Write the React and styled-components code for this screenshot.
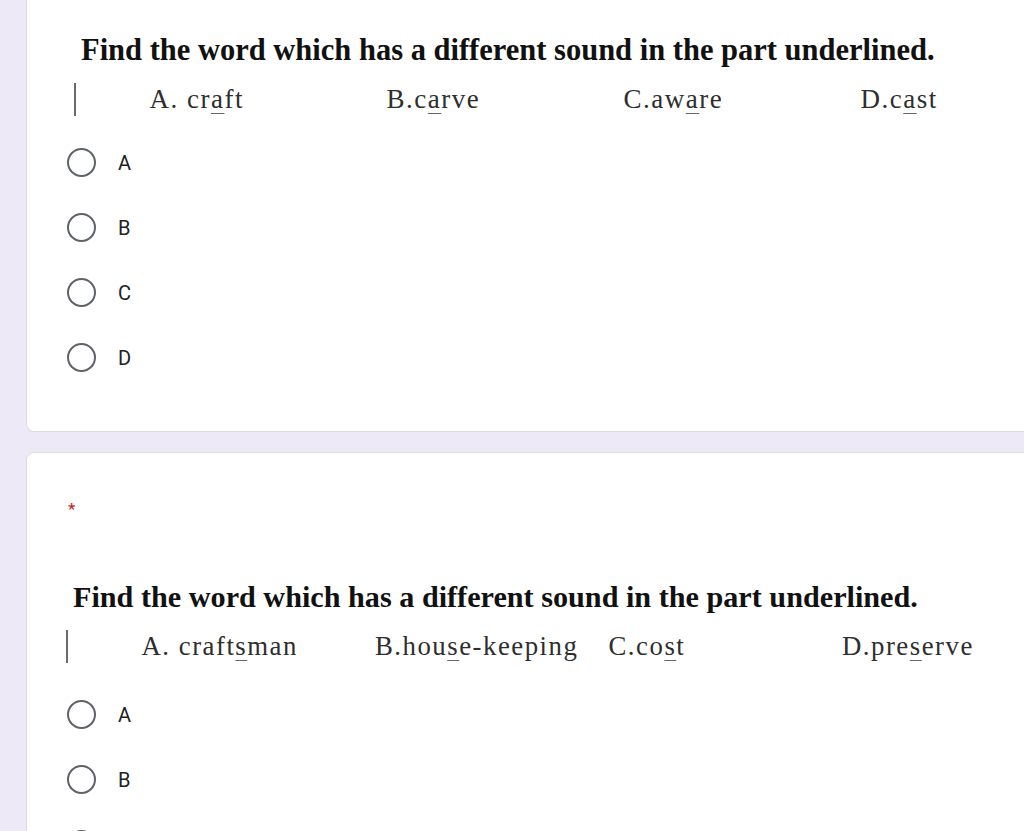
import React from 'react'
import styled, { createGlobalStyle } from 'styled-components'

const GlobalStyle = createGlobalStyle`
	html, body {
		margin: 0;
		padding: 0;
		background: #ede9f7;
	}
`;

const questions = [
	{
		id: 1,
		open: true,
		required: false,
		shift: 0,
		col: 237,
		titleSize: 30.5,
		optionSize: 27,
		top: 32,
		choicesGap: 15,
		options: [
			['A. cr', 'a', 'ft'],
			['B.c', 'a', 'rve'],
			['C.aw', 'a', 're'],
			['D.c', 'a', 'st'],
		],
		answers: ['A', 'B', 'C', 'D'],
	},
	{
		id: 2,
		open: false,
		required: true,
		shift: -8,
		col: 233.5,
		titleSize: 30.2,
		optionSize: 26.8,
		top: 58,
		choicesGap: 20,
		options: [
			['A. craft', 's', 'man'],
			['B.hou', 's', 'e-keeping'],
			['C.co', 's', 't'],
			['D.pre', 's', 'erve'],
		],
		answers: ['A', 'B', 'C', 'D'],
	},
];

function App() {
	return (
		<Page>
			<GlobalStyle />
			<CardList>
				{questions.map((q) => (
					<Card key={q.id} $open={q.open}>
						{q.required && <Required>*</Required>}
						<Title $shift={q.shift} $size={q.titleSize} $top={q.top}>
							Find the word which has a different sound in the part underlined.
						</Title>
						<OptionRow $shift={q.shift} $gap={q.choicesGap}>
							<Caret />
							<OptionGrid $col={q.col} $size={q.optionSize}>
								{q.options.map(([before, mark, after]) => (
									<span key={before}>
										{before}
										<Mark>{mark}</Mark>
										{after}
									</span>
								))}
							</OptionGrid>
						</OptionRow>
						<Choices>
							{q.answers.map((a) => (
								<Choice key={a}>
									<Radio />
									<ChoiceLabel>{a}</ChoiceLabel>
								</Choice>
							))}
						</Choices>
					</Card>
				))}
			</CardList>
		</Page>
	);
}

const Page = styled.div`
	width: 100vw;
	height: 831px;
	overflow: hidden;
	background: #ede9f7;
`;

const CardList = styled.div`
	display: flex;
	flex-direction: column;
	gap: 20px;
	padding-left: 26px;
`;

const Card = styled.section`
	background: #fff;
	border: 1px solid #dcdbe3;
	border-top: ${({ $open }) => ($open ? 'none' : '1px solid #dcdbe3')};
	border-radius: ${({ $open }) => ($open ? '0 0 8px 8px' : '8px')};
	margin-right: -20px;
	padding-bottom: 41px;
	padding-top: ${({ $open }) => ($open ? '0' : '44px')};
`;

const Required = styled.div`
	padding-left: 41px;
	font-family: Roboto, 'Liberation Sans', sans-serif;
	font-size: 17px;
	line-height: 24px;
	height: 24px;
	color: #c5221f;
`;

const Title = styled.h2`
	margin: ${({ $top }) => $top}px 0 0 ${({ $shift }) => 54 + $shift}px;
	font-family: 'Liberation Serif', 'Times New Roman', serif;
	font-weight: bold;
	font-size: ${({ $size }) => $size}px;
	line-height: 36px;
	color: #111;
	white-space: nowrap;
`;

const OptionRow = styled.div`
	display: flex;
	align-items: center;
	margin: 15px 0 ${({ $gap }) => $gap}px ${({ $shift }) => 47 + $shift}px;
	height: 32px;
`;

const Caret = styled.span`
	width: 1.5px;
	height: 33px;
	background: #6b6b6b;
	flex-shrink: 0;
`;

const OptionGrid = styled.div`
	display: grid;
	grid-template-columns: repeat(4, ${({ $col }) => $col}px);
	margin-left: 74px;
	font-family: 'Liberation Serif', 'Times New Roman', serif;
	font-size: ${({ $size }) => $size}px;
	letter-spacing: 1.5px;
	line-height: 32px;
	color: #2e2e2e;
	white-space: nowrap;
`;

const Mark = styled.span`
	text-decoration: underline;
	text-decoration-thickness: 1px;
	text-underline-offset: 5px;
	text-decoration-color: #666;
`;

const Choices = styled.div`
	display: flex;
	flex-direction: column;
	padding-left: 40px;
`;

const Choice = styled.label`
	display: flex;
	align-items: center;
	gap: 22px;
	height: 65px;
`;

const Radio = styled.span`
	box-sizing: border-box;
	width: 29px;
	height: 29px;
	border: 2.5px solid #5f6368;
	border-radius: 50%;
	flex-shrink: 0;
`;

const ChoiceLabel = styled.span`
	font-family: Roboto, 'Liberation Sans', sans-serif;
	font-size: 20px;
	color: #202124;
`;

export default App
